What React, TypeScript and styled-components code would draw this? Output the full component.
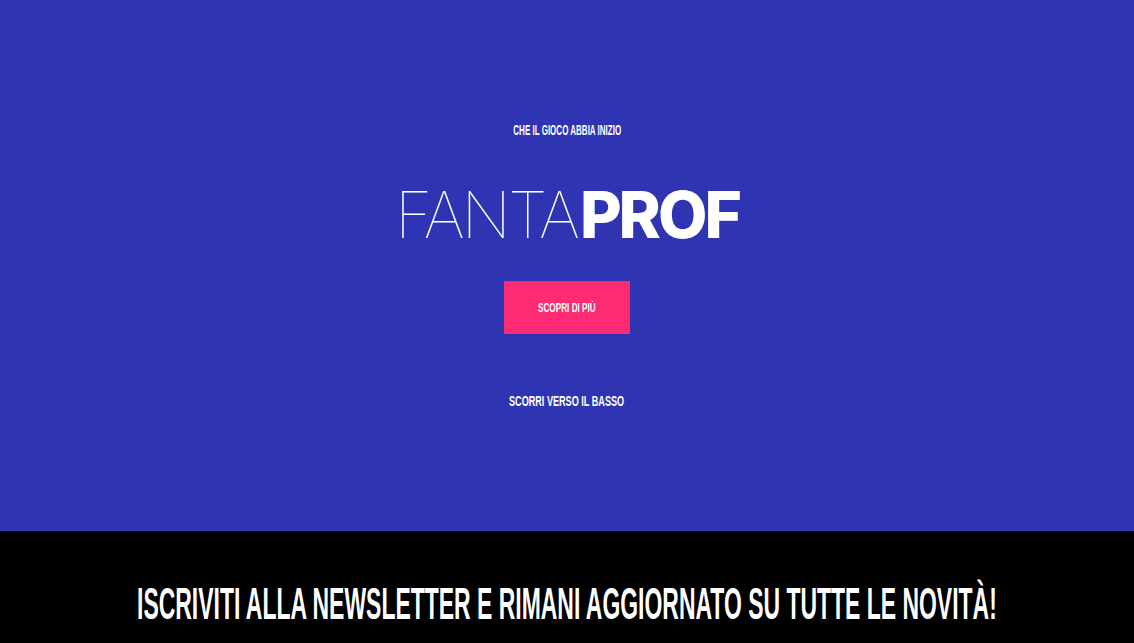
import React from "react";
import styled, { createGlobalStyle } from "styled-components";

const Global = createGlobalStyle`
  html, body { margin: 0; padding: 0; background: #000; }
  body { font-family: "Liberation Sans", Arial, sans-serif; }
  * { box-sizing: border-box; }
`;

const Page = styled.div`
  width: 1134px;
  height: 643px;
  overflow: hidden;
  display: flex;
  flex-direction: column;
`;

const Hero = styled.section`
  height: 531px;
  background: #2f35b2;
  display: flex;
  flex-direction: column;
  align-items: center;
  padding-top: 122px;
`;

const Condensed = styled.span<{ $k: number; $size: number }>`
  display: inline-block;
  font-family: "Liberation Sans Narrow", "Liberation Sans", sans-serif;
  font-weight: 700;
  font-size: ${(p) => p.$size}px;
  line-height: 1;
  color: #fff;
  white-space: nowrap;
  transform: scaleX(${(p) => p.$k});
  transform-origin: center;
`;

const Kicker = styled.div`
  height: 16px;
  display: flex;
  justify-content: center;
  align-items: center;
`;

const Title = styled.h1`
  margin: 44px 0 0;
  font-family: Inter, "Noto Sans", sans-serif;
  font-size: 64px;
  line-height: 66px;
  color: #fff;
  white-space: nowrap;
`;

const Thin = styled.span`
  font-weight: 100;
  letter-spacing: -3px;
`;

const Bold = styled.span`
  font-weight: 800;
  letter-spacing: -3px;
  margin-left: 3px;
`;

const Button = styled.button`
  margin-top: 33px;
  width: 126px;
  height: 53px;
  border: none;
  background: #fe2b74;
  display: flex;
  align-items: center;
  justify-content: center;
  padding: 0;
  cursor: pointer;
`;

const Scroll = styled.div`
  margin-top: 59px;
  height: 16px;
  display: flex;
  justify-content: center;
  align-items: center;
`;

const Footer = styled.section`
  flex: 1;
  background: #000;
  display: flex;
  justify-content: center;
  padding-top: 50px;
`;

export default function App() {
  return (
    <Page>
      <Global />
      <Hero>
        <Kicker>
          <Condensed $k={0.572} $size={14}>CHE IL GIOCO ABBIA INIZIO</Condensed>
        </Kicker>
        <Title>
          <Thin>FANTA</Thin>
          <Bold>PROF</Bold>
        </Title>
        <Button>
          <Condensed $k={0.63} $size={13}>SCOPRI DI PIÙ</Condensed>
        </Button>
        <Scroll>
          <Condensed $k={0.65} $size={14}>SCORRI VERSO IL BASSO</Condensed>
        </Scroll>
      </Hero>
      <Footer>
        <Condensed $k={0.51} $size={45}>
          ISCRIVITI ALLA NEWSLETTER E RIMANI AGGIORNATO SU TUTTE LE NOVITÀ!
        </Condensed>
      </Footer>
    </Page>
  );
}
